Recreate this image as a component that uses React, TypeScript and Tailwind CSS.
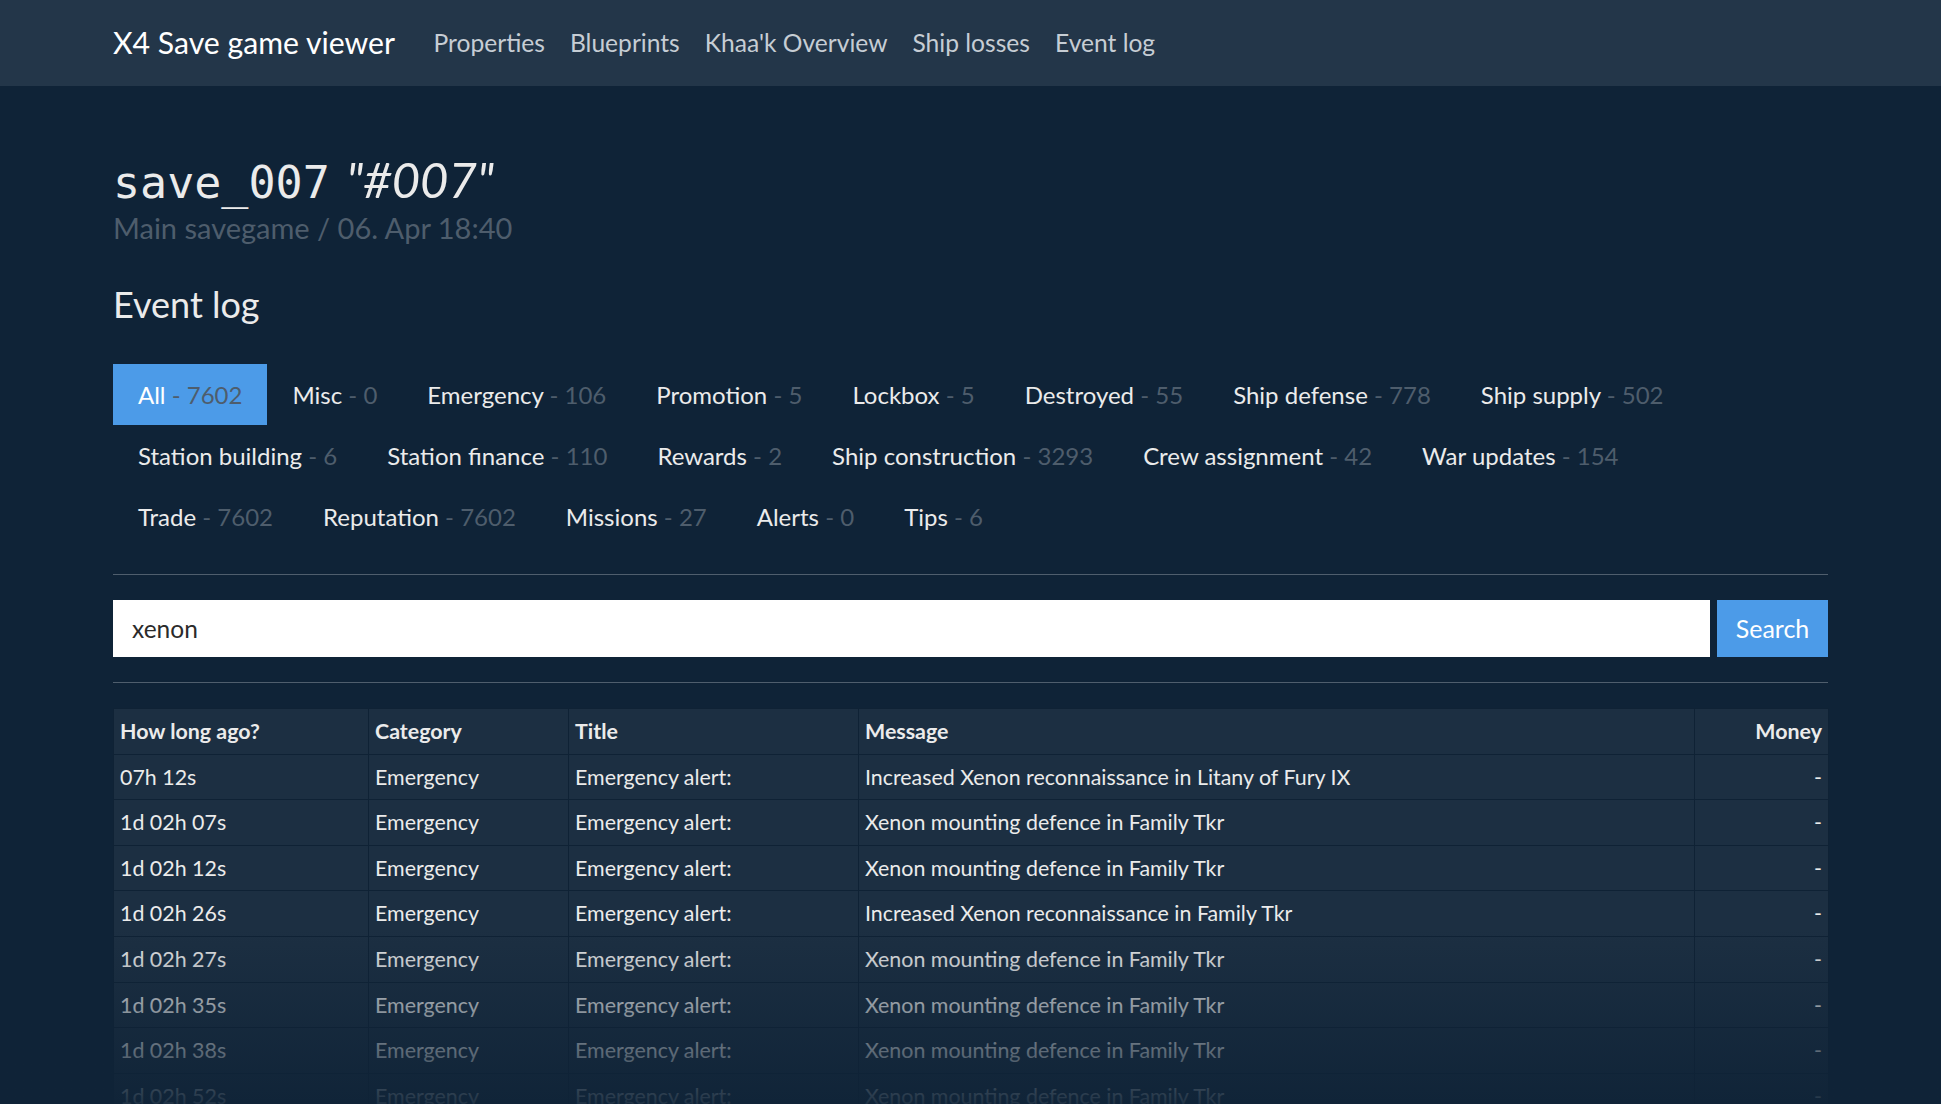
import React from 'react';

const navLinks = ['Properties', 'Blueprints', "Khaa'k Overview", 'Ship losses', 'Event log'];

const categories: [string, string][] = [
  ['All', '7602'],
  ['Misc', '0'],
  ['Emergency', '106'],
  ['Promotion', '5'],
  ['Lockbox', '5'],
  ['Destroyed', '55'],
  ['Ship defense', '778'],
  ['Ship supply', '502'],
  ['Station building', '6'],
  ['Station finance', '110'],
  ['Rewards', '2'],
  ['Ship construction', '3293'],
  ['Crew assignment', '42'],
  ['War updates', '154'],
  ['Trade', '7602'],
  ['Reputation', '7602'],
  ['Missions', '27'],
  ['Alerts', '0'],
  ['Tips', '6'],
];

const defence = 'Xenon mounting defence in Family Tkr';

const events: [string, string][] = [
  ['07h 12s', 'Increased Xenon reconnaissance in Litany of Fury IX'],
  ['1d 02h 07s', defence],
  ['1d 02h 12s', defence],
  ['1d 02h 26s', 'Increased Xenon reconnaissance in Family Tkr'],
  ['1d 02h 27s', defence],
  ['1d 02h 35s', defence],
  ['1d 02h 38s', defence],
  ['1d 02h 52s', defence],
  ['1d 03h 04s', defence],
];

const cellClasses = "border border-[#0f2235] px-[6px] py-[7px] leading-[30.6px]";

export default function App() {
  return (
    <div className="relative h-[1104px] overflow-hidden bg-[#0f2337] text-[#ebebeb] font-['Lato','Noto_Sans',sans-serif]">
      <nav className="h-[86px] bg-[#233649]">
        <div className="mx-auto flex h-full w-[1715px] items-center">
          <a className="mr-[26px] text-[30.2px] text-white">X4 Save game viewer</a>
          {navLinks.map((link) => (
            <a key={link} className="px-[12.5px] text-[24.6px] text-[#c6cdd4]">
              {link}
            </a>
          ))}
        </div>
      </nav>

      <main className="mx-auto w-[1715px]">
        <h1 className="mt-[66px] text-[45px] leading-[54px] text-[#ebebeb]">
          <span className="font-['DejaVu_Sans_Mono',monospace]">save_007</span>
          <span className="ml-[5px] text-[49px] italic"> "#007"</span>
        </h1>
        <div className="text-[29px] leading-[35px] text-[#4e5d6c]">Main savegame / 06. Apr 18:40</div>

        <h2 className="mt-[38px] text-[36px] leading-[43px]">Event log</h2>

        {/* category filter pills */}
        <ul className="mt-[38px] flex flex-wrap">
          {categories.map(([name, count], i) => (
            <li
              key={name}
              className={
                'px-[25px] py-[12.5px] text-[24px] leading-[36px] ' +
                (i === 0 ? 'bg-[#4c9be8] text-white' : 'text-[#ebebeb]')
              }
            >
              {name}
              <span className="text-[#4e5d6c]"> - {count}</span>
            </li>
          ))}
        </ul>

        <hr className="mt-[27px] border-t border-[#4f5e6d]" />

        <form className="mt-[25px] flex gap-[7px]">
          <input
            type="text"
            defaultValue="xenon"
            className="h-[57px] flex-1 bg-white px-[19px] text-[24.5px] text-[#2b2b2b] outline-none"
          />
          <button type="button" className="h-[57px] w-[111px] bg-[#4c9be8] text-[25px] text-white">
            Search
          </button>
        </form>

        <hr className="mt-[25px] border-t border-[#4f5e6d]" />

        <table className="mt-[25px] w-full table-fixed border-collapse bg-[#1c2f42] text-[21.4px]">
          <colgroup>
            <col className="w-[255px]" />
            <col className="w-[200px]" />
            <col className="w-[290px]" />
            <col className="w-[836px]" />
            <col className="w-[134px]" />
          </colgroup>
          <thead>
            <tr className="text-left font-bold">
              <th className={cellClasses}>How long ago?</th>
              <th className={cellClasses}>Category</th>
              <th className={cellClasses}>Title</th>
              <th className={cellClasses}>Message</th>
              <th className={cellClasses + ' text-right'}>Money</th>
            </tr>
          </thead>
          <tbody>
            {events.map(([ago, message], i) => (
              <tr key={i}>
                <td className={cellClasses}>{ago}</td>
                <td className={cellClasses}>Emergency</td>
                <td className={cellClasses}>Emergency alert:</td>
                <td className={cellClasses}>{message}</td>
                <td className={cellClasses + ' text-right'}>-</td>
              </tr>
            ))}
          </tbody>
        </table>
      </main>

      {/* bottom fade of the long list */}
      <div className="pointer-events-none absolute inset-x-0 bottom-0 h-[175px] bg-linear-to-b from-[#0f2337]/0 to-[#0f2337]/92" />
    </div>
  );
}
